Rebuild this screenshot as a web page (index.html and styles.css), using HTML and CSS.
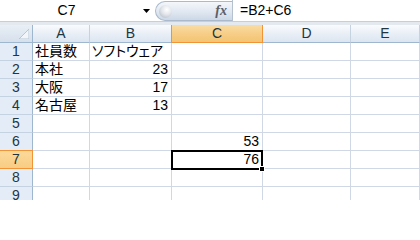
FILE: index.html
```html
<!DOCTYPE html>
<html lang="ja">
<head>
<meta charset="utf-8">
<link rel="stylesheet" href="styles.css">
</head>
<body>
<div class="fbar">
  <div class="namebox">
    <span class="name">C7</span>
    <svg class="arrow" width="7" height="4" viewBox="0 0 7 4"><polygon points="0,0 7,0 3.5,4" fill="#000"/></svg>
  </div>
  <div class="fxbtn"><span class="knob"></span><span class="fx">fx</span></div>
  <div class="formula">=B2+C6</div>
</div>
<div class="band"></div>
<div class="sheet">
  <div class="corner"><svg width="10" height="10" viewBox="0 0 10 10"><polygon points="10,0 10,10 0,10" fill="#f2f5f9" stroke="#b7c6d8" stroke-width="1"/></svg></div>
  <div class="ch">A</div><div class="ch">B</div><div class="ch selc">C</div><div class="ch">D</div><div class="ch last">E</div>

  <div class="rh">1</div><div class="c">社員数</div><div class="c">ソフトウェア</div><div class="c"></div><div class="c"></div><div class="c"></div>
  <div class="rh">2</div><div class="c">本社</div><div class="c num">23</div><div class="c"></div><div class="c"></div><div class="c"></div>
  <div class="rh">3</div><div class="c">大阪</div><div class="c num">17</div><div class="c"></div><div class="c"></div><div class="c"></div>
  <div class="rh">4</div><div class="c">名古屋</div><div class="c num">13</div><div class="c"></div><div class="c"></div><div class="c"></div>
  <div class="rh">5</div><div class="c"></div><div class="c"></div><div class="c"></div><div class="c"></div><div class="c"></div>
  <div class="rh">6</div><div class="c"></div><div class="c"></div><div class="c num">53</div><div class="c"></div><div class="c"></div>
  <div class="rh selr">7</div><div class="c"></div><div class="c"></div><div class="c num active">76<span class="selbox"></span><span class="handle"></span></div><div class="c"></div><div class="c"></div>
  <div class="rh">8</div><div class="c"></div><div class="c"></div><div class="c"></div><div class="c"></div><div class="c"></div>
  <div class="rh">9</div><div class="c"></div><div class="c"></div><div class="c"></div><div class="c"></div><div class="c"></div>
</div>
</body>
</html>
```

FILE: styles.css
```css
html, body {
  margin: 0;
  padding: 0;
  background: #fff;
}
body {
  width: 420px;
  height: 200px;
  overflow: hidden;
  font-family: "Liberation Sans", "Noto Sans CJK JP", sans-serif;
  font-size: 14px;
  color: #000;
  font-feature-settings: "palt";
}

/* formula bar */
.fbar {
  display: flex;
  height: 21px;
  background: #fff;
}
.namebox {
  width: 155px;
  display: flex;
  align-items: center;
}
.namebox .name {
  width: 133px;
  text-align: center;
  line-height: 21px;
}
.arrow {
  margin-left: 10px;
  margin-top: 1px;
}
.fxbtn {
  box-sizing: border-box;
  width: 77px;
  height: 20px;
  margin-top: 1px;
  border: 1px solid #aab9cc;
  border-right: none;
  border-radius: 10px 0 0 10px;
  background: linear-gradient(#f4f7fb, #e2e9f2 50%, #ccd8e7);
  display: flex;
  align-items: center;
}
.knob {
  width: 13px;
  height: 13px;
  margin-left: 3px;
  border-radius: 50%;
  background: radial-gradient(circle at 60% 35%, #ffffff 0%, #e1e5ea 45%, #a9b2be 100%);
}
.fx {
  margin-left: auto;
  margin-right: 5px;
  font-family: "Liberation Serif", serif;
  font-style: italic;
  font-weight: bold;
  font-size: 14px;
  color: #5b5f66;
  line-height: 18px;
}
.formula {
  flex: 1;
  border-left: 1px solid #b5c1cf;
  padding-left: 7px;
  line-height: 21px;
}

.band {
  box-sizing: border-box;
  height: 4px;
  border-top: 1px solid #c6ced8;
  background: #e4e9ef;
}

/* sheet grid */
.sheet {
  display: grid;
  grid-template-columns: 33px 57px 82px 91px 88px 1fr;
  grid-auto-rows: 18px;
}
.sheet > div {
  box-sizing: border-box;
  white-space: nowrap;
  line-height: 17px;
}
.c {
  border-right: 1px solid #d0d7e5;
  border-bottom: 1px solid #d0d7e5;
  padding: 0 3px 0 2px;
}
.num {
  text-align: right;
}
.corner {
  background: linear-gradient(#e9eff6, #d6e0ec);
  border-right: 1px solid #9eb6ce;
  border-bottom: 1px solid #9eb6ce;
  display: flex;
  align-items: flex-end;
  justify-content: flex-end;
  padding: 0 3px 3px 0;
}
.corner svg {
  display: block;
}
.ch {
  background: linear-gradient(#f9fbfd, #e8eef6 55%, #dce5f0);
  border-right: 1px solid #c5d2e0;
  border-bottom: 1px solid #9eb6ce;
  text-align: center;
  color: #23353f;
}
.ch.selc {
  background: linear-gradient(#f9dca3, #f6cd85 55%, #f3c572);
  border-right-color: #f29436;
  border-bottom-color: #f29436;
  box-shadow: -1px 0 0 #f29436;
}
.rh {
  background: #e4ecf7;
  border-right: 1px solid #9eb6ce;
  border-bottom: 1px solid #c5d2e2;
  text-align: center;
  color: #23353f;
}
.rh.selr {
  background: linear-gradient(#fcd99a, #f8cd84);
  border-bottom-color: #f29436;
  border-right-color: #f29436;
  box-shadow: 0 -1px 0 #f29436;
}

/* active cell */
.active {
  position: relative;
}
.selbox {
  position: absolute;
  left: -1px;
  top: -1px;
  right: -1px;
  bottom: -2px;
  border: 2px solid #000;
}
.handle {
  position: absolute;
  right: -3px;
  bottom: -4px;
  width: 6px;
  height: 6px;
  box-sizing: border-box;
  border: 1px solid #fff;
  background: #000;
}
```
